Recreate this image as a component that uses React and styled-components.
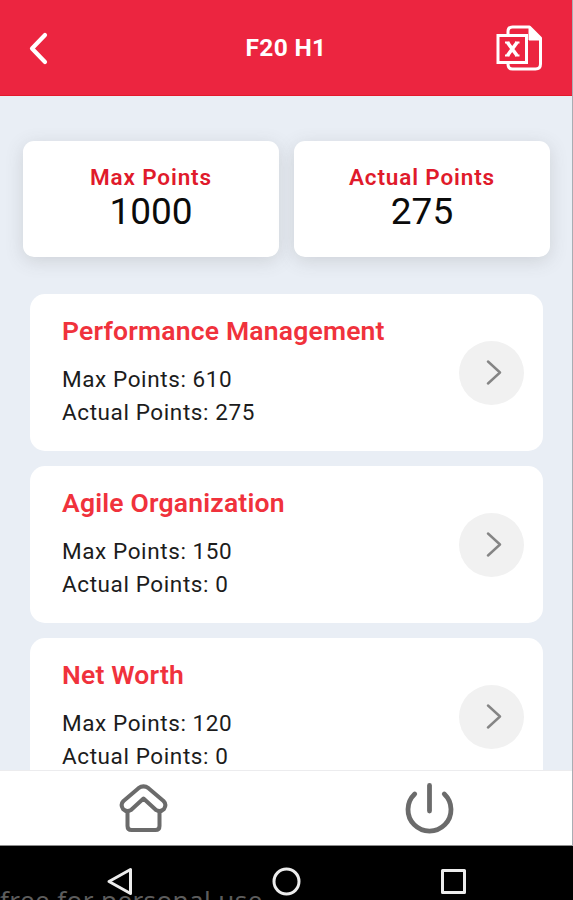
import React from 'react';
import styled, { createGlobalStyle } from 'styled-components';

const GlobalStyle = createGlobalStyle`
  * {
    box-sizing: border-box;
  }

  body {
    margin: 0;
    background-color: #000;
    font-family: Roboto, sans-serif;
  }

  h1, h2, p {
    margin: 0;
  }

  button {
    padding: 0;
    border: none;
    background: none;
    font: inherit;
    cursor: pointer;
  }

  svg {
    display: block;
  }
`;

const Screen = styled.div`
  display: flex;
  flex-direction: column;
  height: 900px;
  overflow: hidden;
`;

const AppArea = styled.div`
  display: flex;
  flex-direction: column;
  height: 846px;
  border-right: 1px solid #a9adb3;
  background-color: #e9eef5;
`;

const Header = styled.header`
  display: grid;
  grid-template-columns: 76px 1fr 76px;
  align-items: center;
  flex: none;
  height: 96px;
  background-color: #ec2540;
  border-bottom: 1px solid #e3192b;
  color: white;
`;

const HeaderButton = styled.button`
  display: flex;
  justify-content: ${(props) => (props.$align === 'start' ? 'flex-start' : 'center')};
  color: white;
`;

const HeaderTitle = styled.h1`
  text-align: center;
  font-size: 24.5px;
  font-weight: 700;
  line-height: 30px;
  letter-spacing: 0.3px;
`;

const Content = styled.main`
  flex: 1;
  min-height: 0;
  overflow: hidden;
  padding-top: 45px;
`;

const Summary = styled.section`
  display: grid;
  grid-template-columns: 1fr 1fr;
  gap: 15px;
  padding: 0 22px 0 23px;
`;

const SummaryCard = styled.div`
  height: 116px;
  padding-top: 22px;
  border-radius: 11px;
  background-color: white;
  box-shadow: 0 4px 18px rgba(80, 80, 75, 0.17);
  text-align: center;
`;

const SummaryLabel = styled.h2`
  color: #e01a2b;
  font-size: 22.5px;
  font-weight: 650;
  line-height: 28px;
  letter-spacing: 0.85px;
`;

const SummaryValue = styled.p`
  color: #0b0b0b;
  font-size: 37px;
  font-weight: 400;
  line-height: 42px;
`;

const List = styled.section`
  display: flex;
  flex-direction: column;
  gap: 15px;
  padding: 37px 29px 0 30px;
`;

const ListCard = styled.article`
  display: flex;
  justify-content: space-between;
  align-items: center;
  flex: none;
  height: 157px;
  padding: 0 19px 0 32px;
  border-radius: 15px;
  background-color: white;
`;

const CardText = styled.div`
  padding-bottom: 2px;
`;

const CardTitle = styled.h2`
  margin-bottom: 15px;
  color: #f0323c;
  font-size: 26.5px;
  font-weight: 600;
  line-height: 34px;
  letter-spacing: 0.2px;
`;

const CardLine = styled.p`
  color: #1c1c1c;
  font-size: 22.5px;
  line-height: 33px;
  letter-spacing: 0.6px;
`;

const ArrowButton = styled.button`
  display: flex;
  justify-content: center;
  align-items: center;
  width: 65px;
  height: 64px;
  padding-left: 5px;
  border-radius: 50%;
  background-color: #f1f1f1;
`;

const TabBar = styled.nav`
  display: grid;
  grid-template-columns: 1fr 1fr;
  flex: none;
  height: 76px;
  border-top: 1px solid #ececee;
  border-bottom: 1px solid #8c8c8c;
  background-color: white;
`;

const TabButton = styled.button`
  display: flex;
  justify-content: center;
  align-items: center;
`;

const SystemBar = styled.footer`
  position: relative;
  display: grid;
  grid-template-columns: 1fr 1fr 1fr;
  align-items: start;
  height: 54px;
  padding: 20px 36px 0 37px;
  background-color: black;
  overflow: hidden;
`;

const SystemButton = styled.button`
  display: flex;
  justify-content: center;
`;

const Watermark = styled.span`
  position: absolute;
  left: 0;
  top: 36px;
  color: #5c5c5c;
  font-family: 'Noto Sans', sans-serif;
  font-size: 26px;
  line-height: 36px;
  letter-spacing: 0.4px;
  white-space: nowrap;
`;

const categories = [
  { name: 'Performance Management', max: 610, actual: 275 },
  { name: 'Agile Organization', max: 150, actual: 0 },
  { name: 'Net Worth', max: 120, actual: 0 },
];

const BackIcon = () => (
  <svg width="22" height="34" viewBox="0 0 22 34" fill="none" stroke="currentColor" strokeWidth="4.2" strokeLinecap="round" strokeLinejoin="round">
    <path d="M18 4 L5 17.5 L18 31" />
  </svg>
);

const ExcelIcon = () => (
  <svg width="48" height="48" viewBox="0.5 0 48 48" fill="none" stroke="currentColor" strokeWidth="3" strokeLinejoin="round">
    <path d="M12.5 11 V7.5 Q12.5 3 17 3 H34 L45 14 V40 Q45 45 40 45 H17 Q12.5 45 12.5 40 V38.5" />
    <path d="M33.5 3 V16 H45 Z" fill="currentColor" strokeWidth="1" />
    <rect x="2.5" y="11.5" width="28.5" height="27" strokeLinejoin="miter" />
    <path d="M12 18.5 L21.5 31.5 M21.5 18.5 L12 31.5" strokeWidth="3.6" />
    <path d="M9.5 18.5 H14 M19.5 18.5 H24 M9.5 31.5 H14 M19.5 31.5 H24" strokeWidth="2" />
  </svg>
);

const ArrowIcon = () => (
  <svg width="16" height="26" viewBox="0 0 16 26" fill="none" stroke="#858585" strokeWidth="2.4" strokeLinecap="round" strokeLinejoin="round">
    <path d="M2 1.5 L14 12.5 L2 23.5" />
  </svg>
);

const HomeIcon = () => (
  <svg width="50" height="50" viewBox="0 0 50 50" fill="none" stroke="#6b6b6b" strokeWidth="4" strokeLinejoin="round">
    <path d="M25.5 15.5 L13 27 Q8.5 29.5 5 26 Q2 21.5 5.5 18 L20.5 5.2 Q25.5 1.5 30.5 5.2 L45.5 18 Q49 21.5 46 26 Q42.5 29.5 38 27 Z" />
    <path d="M9.5 28 V43 Q9.5 47 13.5 47 H37.5 Q41.5 47 41.5 43 V28" />
  </svg>
);

const PowerIcon = () => (
  <svg width="50" height="54" viewBox="0 0 50 54" fill="none" stroke="#6b6b6b" strokeWidth="4.8" strokeLinecap="round">
    <path d="M25.5 4.5 V30" />
    <path d="M10.7 13 A21.5 21.5 0 1 0 40.3 13" />
  </svg>
);

const App = () => {
  return (
    <Screen>
      <GlobalStyle />
      <AppArea>
        <Header>
          <HeaderButton aria-label="Back">
            <BackIcon />
          </HeaderButton>
          <HeaderTitle>F20 H1</HeaderTitle>
          <HeaderButton $align="start" aria-label="Export to Excel">
            <ExcelIcon />
          </HeaderButton>
        </Header>

        <Content>
          <Summary>
            <SummaryCard>
              <SummaryLabel>Max Points</SummaryLabel>
              <SummaryValue>1000</SummaryValue>
            </SummaryCard>
            <SummaryCard>
              <SummaryLabel>Actual Points</SummaryLabel>
              <SummaryValue>275</SummaryValue>
            </SummaryCard>
          </Summary>

          <List>
            {categories.map((item) => (
              <ListCard key={item.name}>
                <CardText>
                  <CardTitle>{item.name}</CardTitle>
                  <CardLine>Max Points: {item.max}</CardLine>
                  <CardLine>Actual Points: {item.actual}</CardLine>
                </CardText>
                <ArrowButton aria-label={`Open ${item.name}`}>
                  <ArrowIcon />
                </ArrowButton>
              </ListCard>
            ))}
          </List>
        </Content>

        <TabBar>
          <TabButton aria-label="Home">
            <HomeIcon />
          </TabButton>
          <TabButton aria-label="Log out">
            <PowerIcon />
          </TabButton>
        </TabBar>
      </AppArea>

      <SystemBar>
        <Watermark>free for personal use</Watermark>
        <SystemButton aria-label="System back">
          <svg width="30" height="30" viewBox="0 0 30 30" fill="none" stroke="#ececec" strokeWidth="3" strokeLinejoin="round">
            <path d="M25.5 3.5 V27.5 L4 15.5 Z" />
          </svg>
        </SystemButton>
        <SystemButton aria-label="System home">
          <svg width="30" height="30" viewBox="0 0 30 30" fill="none" stroke="#ececec" strokeWidth="3">
            <circle cx="14.5" cy="15.5" r="12.5" />
          </svg>
        </SystemButton>
        <SystemButton aria-label="Recent apps">
          <svg width="30" height="30" viewBox="0 0 30 30" fill="none" stroke="#ececec" strokeWidth="3" strokeLinejoin="round">
            <rect x="3.5" y="4.5" width="22" height="22" />
          </svg>
        </SystemButton>
      </SystemBar>
    </Screen>
  );
};

export default App;
